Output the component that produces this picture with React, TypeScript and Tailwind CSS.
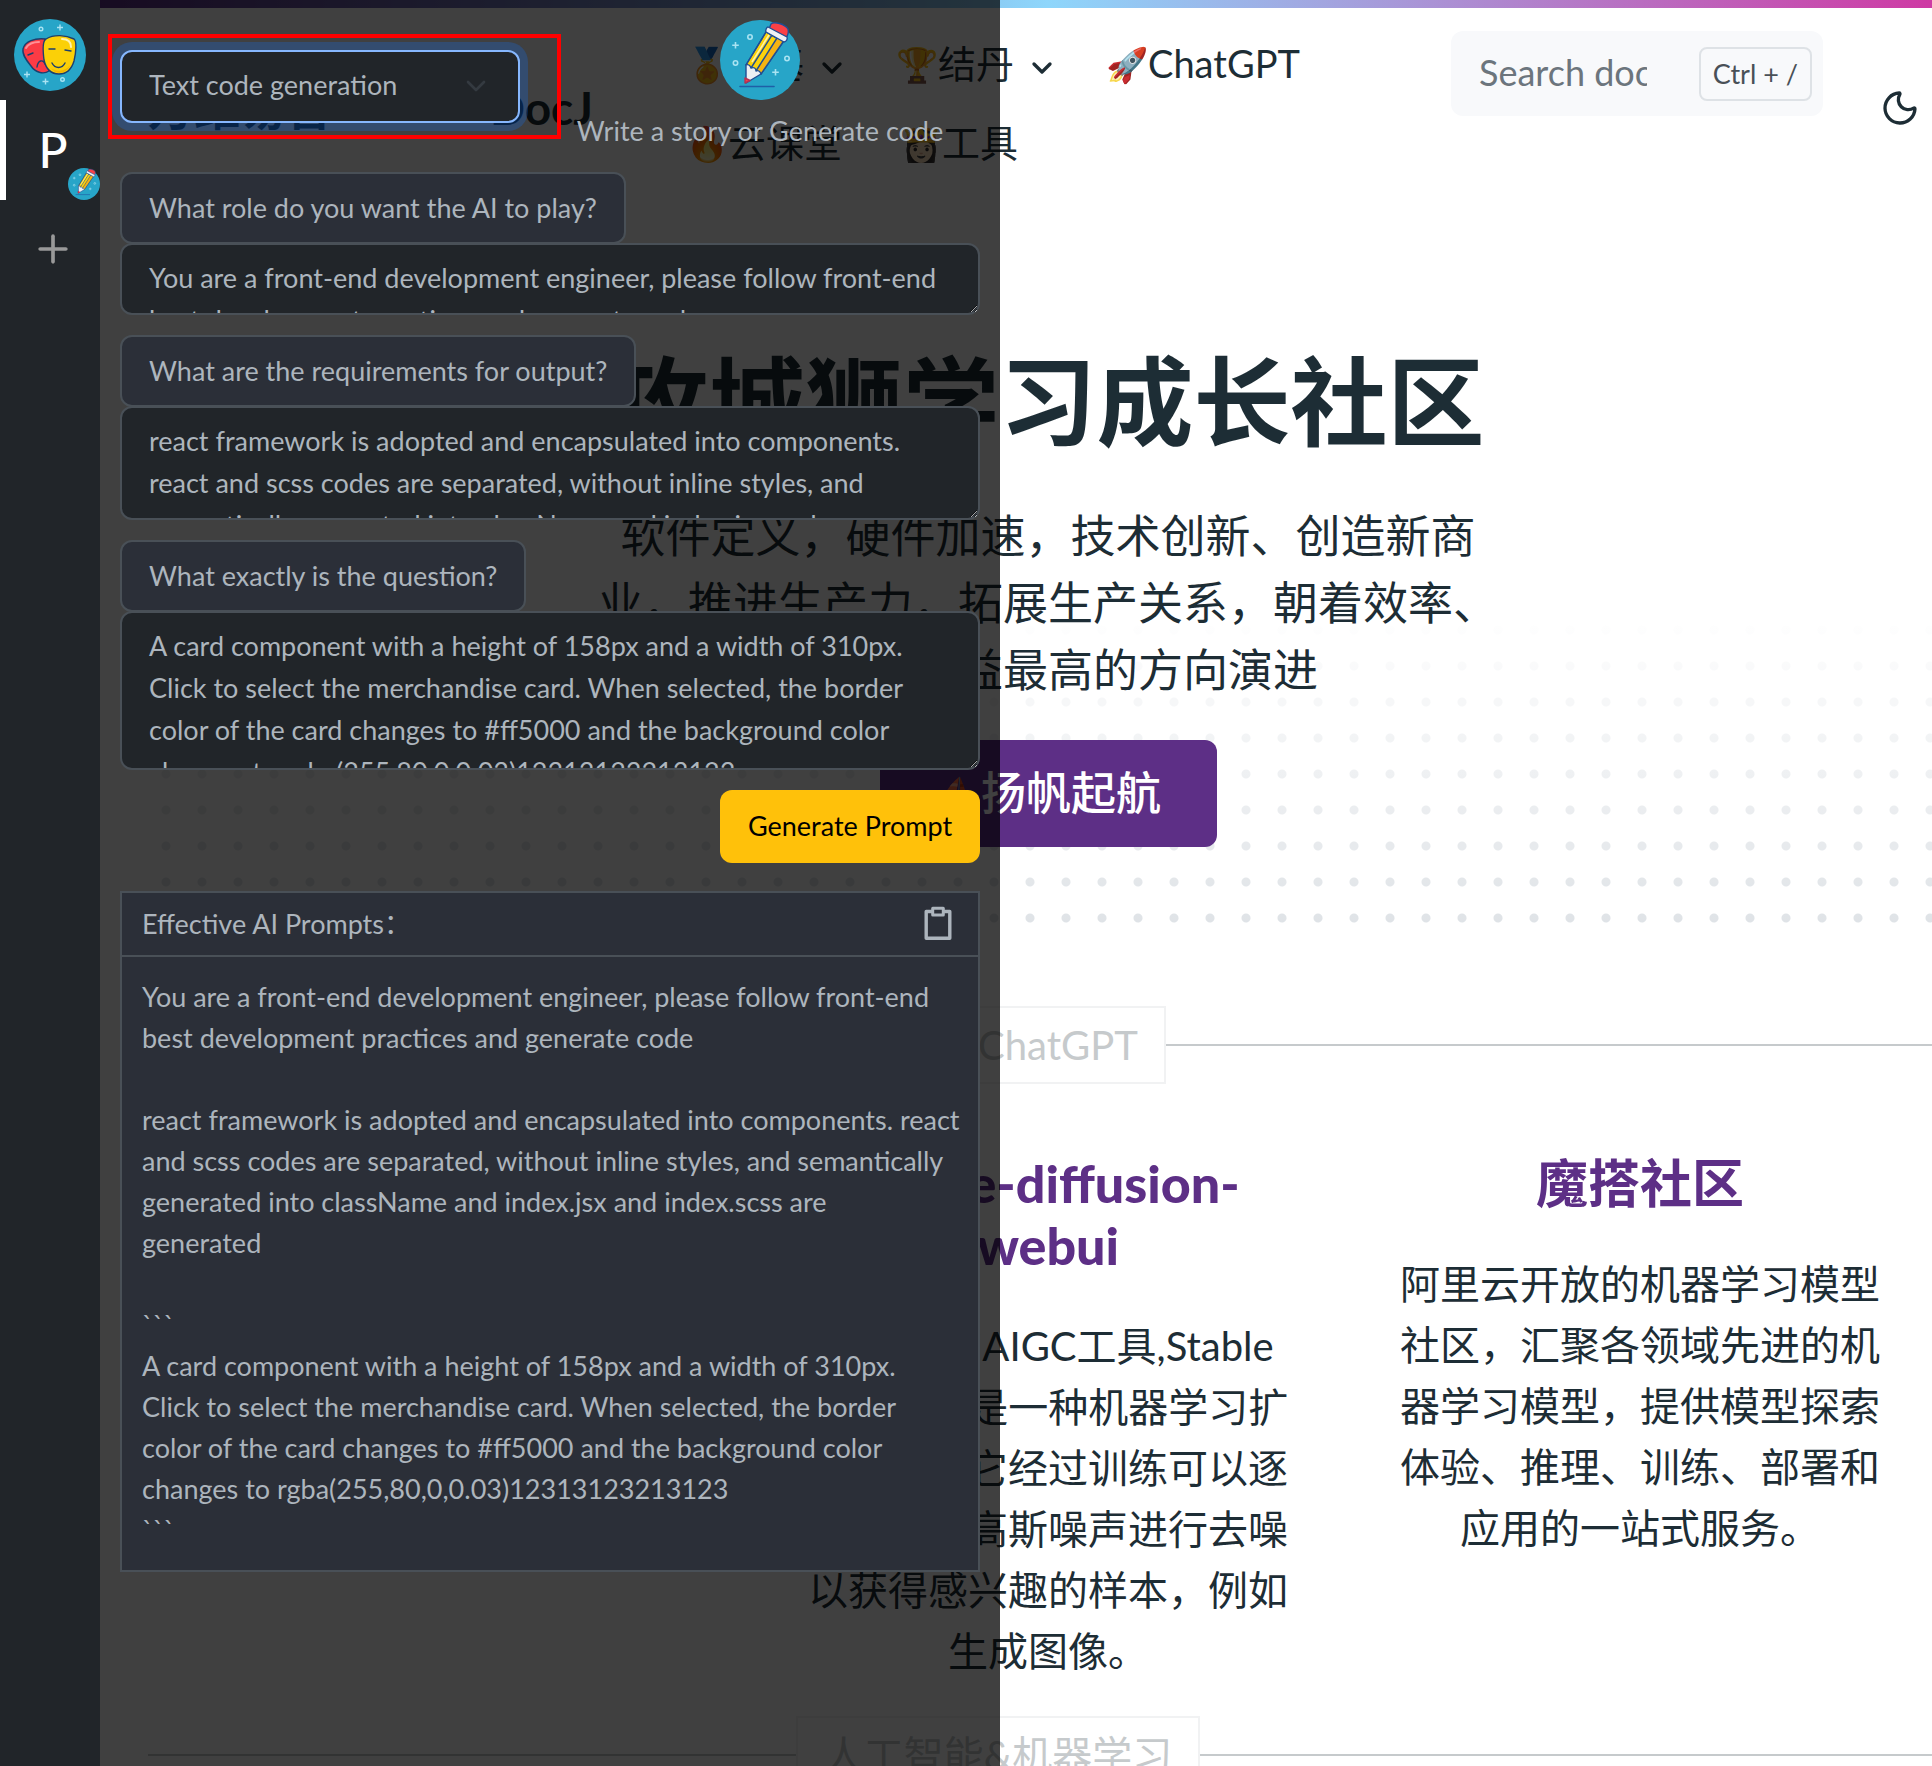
import type { ReactNode } from "react";
import { ChevronDown, Moon, Plus } from "lucide-react";

function MasksLogo() {
  return (
    <svg viewBox="0 0 72 72" className="size-18" role="img" aria-label="Masks logo">
      <circle cx="36" cy="36" r="36" fill="#27a5c8" />
      <g fill="none" stroke="#a9e3f2" strokeWidth="1.4">
        <circle cx="27" cy="10" r="1.8" />
        <circle cx="48.500" cy="60.500" r="1.8" />
        <path d="M46 5.500v6M43 8.500h6M13 52.500v6M10 55.500h6M31.500 59.500v6M28.500 62.500h6" />
      </g>
      <g stroke="#1c3f6e" strokeWidth="1.4" strokeLinecap="round" strokeLinejoin="round">
        <path d="M9 30c2-8 12-11 22-10l4 32c-6 4-14 1-18-5-4-5-9-11-8-17Z" fill="#fb3b45" />
        <path d="M14 36l5-2M23 48c1-7 6-8 8-3" fill="none" />
        <path d="M32 20c8-5 20-4 28 0 3 2 2 14 0 22-3 10-9 13-15 13-8 0-13-5-15-14-1-8-2-19 2-21Z" fill="#fbd007" />
        <path d="M35 30h6M51 31l6 1M38 44c3 6 10 6 13 0" fill="none" />
      </g>
      <path d="M12 29c3-5 8-6 13-6" fill="none" stroke="#ff8f96" strokeWidth="2" strokeLinecap="round" />
      <path d="M48 20c6 0 9 3 9 8" fill="none" stroke="#fff3b0" strokeWidth="2" strokeLinecap="round" />
      <path d="M37 49c5 4 15 4 20-4-3 6-7 9-12 9-3 0-6-2-8-5Z" fill="#f5b400" />
    </svg>
  );
}

function PencilLogo({ className }: { className: string }) {
  return (
    <svg viewBox="0 0 80 80" className={className} role="img" aria-label="Pencil logo">
      <circle cx="40" cy="40" r="40" fill="#27a5c8" />
      <g fill="none" stroke="#a9e3f2" strokeWidth="1.6">
        <circle cx="30" cy="17" r="2.200" />
        <circle cx="15.500" cy="43" r="2.200" />
        <circle cx="67" cy="38.500" r="2.200" />
        <path d="M15.500 22v6.500M12.200 25.200h6.600M55.500 49v6.500M52.200 52.200h6.600" />
      </g>
      <g stroke="#1f4e94" strokeWidth="1.400" strokeLinejoin="round">
        <path d="M51 4c3-3 14 0 17 5 1 3 0 6-2 9L49 9Z" fill="#fb4046" />
        <path d="M46 12l17 10-22 32-15-9Z" fill="#fcd20b" />
        <path d="M57 18l6 4-22 32-5-3Z" fill="#f5b313" stroke="none" />
        <path d="M52 15L31 48M57 18L36 51M46 12L26 45M63 22L41 54" fill="none" />
        <path d="M48 7l19 10c1 2-1 5-3 5L46 12c-1-2 1-5 2-5Z" fill="#eef1f6" />
        <path d="M26 45c2-1 4 0 5 3 3-1 5 0 5 3 2-1 4 0 5 3L26 63Z" fill="#eceff3" />
        <path d="M25 58l5 2.500-5 2.500Z" fill="#fb4046" stroke="#b33355" />
      </g>
      <path d="M49 15L32 42" stroke="#fff2a6" strokeWidth="1.600" />
      <path d="M20 66.500h34" stroke="#1f5fa6" strokeWidth="1.600" strokeLinecap="round" />
    </svg>
  );
}

function NavItem({ icon, label, menu }: { icon: string; label: string; menu?: boolean }) {
  return (
    <a href="#" className="flex items-center whitespace-nowrap">
      <span className="w-[42px] overflow-hidden text-center text-[34px]">{icon}</span>
      {label}
      {menu && <ChevronDown className="ml-3 mt-2 size-8" strokeWidth={2.5} />}
    </a>
  );
}

function Divider({ children }: { children: ReactNode }) {
  return (
    <div className="flex items-center">
      <span className="h-[2px] flex-1 bg-[#c6cacc]" />
      <span className="border-2 border-[#f1f2f3] px-[26px] text-[40px] leading-[74px] whitespace-nowrap text-[#c6cacc]">
        {children}
      </span>
      <span className="h-[2px] flex-1 bg-[#c6cacc] pl-[100px]" />
    </div>
  );
}

function Card({ title, lines }: { title: ReactNode; lines: string[] }) {
  return (
    <article className="text-center">
      <h2 className="text-[52px] leading-[62px] font-bold whitespace-nowrap text-[#5d2f86]">{title}</h2>
      <p className="mt-10 text-[40px] leading-[61px]">
        {lines.map((t) => (
          <span key={t} className="block whitespace-nowrap">{t}</span>
        ))}
      </p>
    </article>
  );
}

function Page() {
  return (
    <div className="-mr-16 ml-[100px]">
      <div className="h-2 bg-[linear-gradient(90deg,#5d2f86,#8ed6fb_50%,#d32e9d)]" />
      <header className="flex px-12">
        <a
          href="#"
          className="mt-[72px] flex w-[538px] gap-[158px] text-[46px] leading-[56px] font-bold whitespace-nowrap"
        >
          <span>万维易智</span>
          <span>DocJ</span>
        </a>
        <nav className="mt-4 flex-1 text-[38px] leading-[79px]">
          <div className="flex gap-12">
            <NavItem icon="🏅" label="筑基" menu />
            <NavItem icon="🏆" label="结丹" menu />
            <NavItem icon="🚀" label="ChatGPT" />
          </div>
          <div className="flex gap-[58px]">
            <NavItem icon="🔥" label="云课堂" />
            <NavItem icon="👸🏻" label="工具" />
          </div>
        </nav>
        <label className="mt-[23px] flex h-[85px] w-[372px] items-center justify-between rounded-xl bg-[#f8f9fb] pr-[11px] pl-7">
          <input
            aria-label="Search docs"
            placeholder="Search docs..."
            className="w-[168px] bg-transparent pb-1 text-[36px] placeholder:text-[#6c757d] placeholder:opacity-100"
          />
          <kbd className="rounded-lg border-2 border-[#dee2e6] px-3 font-[inherit] text-[27px] leading-[50px] whitespace-nowrap text-[#495057]">
            Ctrl + /
          </kbd>
        </label>
        <button aria-label="Toggle dark mode" className="mt-20 mr-7 ml-[57px] h-10">
          <Moon className="size-10" strokeWidth={2} />
        </button>
      </header>

      <main className="px-12">
        <section className="mt-[160px] bg-[linear-gradient(to_bottom,white_46%,transparent_100%),radial-gradient(circle_at_center,#dee2e6_4px,transparent_5px)] bg-[size:100%_100%,36px_36px] bg-[position:left_bottom,left_bottom] pb-[89px] text-center">
          <h1 className="text-[97px] leading-[118px] font-bold whitespace-nowrap">攻城狮学习成长社区</h1>
          <p className="mt-[43px] text-[45px] leading-[67px] whitespace-nowrap">
            软件定义，硬件加速，技术创新、创造新商
            <br />
            业，推进生产力，拓展生产关系，朝着效率、
            <br />
            质量、收益最高的方向演进
          </p>
          <a
            href="#"
            className="mt-9 inline-flex h-[107px] w-[337px] items-center justify-center rounded-xl bg-[#5d2f86] text-[45px] font-medium whitespace-nowrap text-white"
          >
            <span className="mr-1 text-[34px]">⛵</span>扬帆起航
          </a>
        </section>
        <div className="mt-[70px]">
          <Divider>大模型ChatGPT</Divider>
        </div>
        <div className="mt-[68px] grid grid-cols-3 px-3">
          <div />
          <Card
            title={
              <span className="font-black">
                stable-diffusion-
                <br />
                webui
              </span>
            }
            lines={[
              "最热门的AIGC工具,Stable",
              "Diffusion是一种机器学习扩",
              "散模型，它经过训练可以逐",
              "步对随机高斯噪声进行去噪",
              "以获得感兴趣的样本，例如",
              "生成图像。",
            ]}
          />
          <Card
            title="魔搭社区"
            lines={[
              "阿里云开放的机器学习模型",
              "社区，汇聚各领域先进的机",
              "器学习模型，提供模型探索",
              "体验、推理、训练、部署和",
              "应用的一站式服务。",
            ]}
          />
        </div>
        <div className="mt-[34px]">
          <Divider>人工智能&amp;机器学习</Divider>
        </div>
      </main>
    </div>
  );
}

function Sidebar() {
  return (
    <aside className="flex w-[100px] shrink-0 flex-col bg-[#212529]">
      <div className="flex h-[100px] items-center justify-center pt-2.5">
        <MasksLogo />
      </div>
      <button className="relative h-[100px] border-l-[6px] border-white text-[48px] font-medium text-white">
        P
        <PencilLogo className="absolute right-0 bottom-0 size-8" />
      </button>
      <button aria-label="Add" className="flex h-[98px] items-center justify-center pl-1.5 text-[#999]">
        <Plus className="size-11" strokeWidth={2} />
      </button>
    </aside>
  );
}

function Field({ id, label, value, box }: { id: string; label: string; value: string; box: string }) {
  return (
    <div className="mb-5 flex flex-col items-start">
      <label
        htmlFor={id}
        className="rounded-xl border-2 border-[#495057] bg-[#2b2f38] px-[27px] py-[13px] leading-[42px] whitespace-nowrap"
      >
        {label}
      </label>
      <textarea
        id={id}
        defaultValue={value}
        className={`-mt-px w-full overflow-hidden rounded-xl border-2 border-[#495057] bg-[#212529] px-[27px] pt-3 leading-[42px] ${box}`}
      />
    </div>
  );
}

const role =
  "You are a front-end development engineer, please follow front-end\nbest development practices and generate code";
const requirements =
  "react framework is adopted and encapsulated into components.\nreact and scss codes are separated, without inline styles, and\nsemantically generated into className and index.jsx and";
const question =
  "A card component with a height of 158px and a width of 310px.\nClick to select the merchandise card. When selected, the border\ncolor of the card changes to #ff5000 and the background color\nchanges to rgba(255,80,0,0.03)12313123213123";
const prompt = `${role}

react framework is adopted and encapsulated into components. react
and scss codes are separated, without inline styles, and semantically
generated into className and index.jsx and index.scss are
generated

\`\`\`
${question}
\`\`\``;

function Panel() {
  return (
    <div className="min-w-0 flex-1 bg-black/75 p-5 text-[27px] text-[#adb5bd]">
      <div className="mb-5 flex gap-5">
        <div className="relative mt-[30px] h-[73px] w-[400px]">
          <select
            aria-label="Prompt type"
            className="size-full appearance-none rounded-xl border-2 border-[#86b7fe] bg-[#212529] px-[27px] pb-0.5 shadow-[0_0_0_8px_rgba(13,110,253,0.25)] outline-none"
          >
            <option>Text code generation</option>
          </select>
          <ChevronDown className="pointer-events-none absolute top-5 right-7 size-8 text-[#343a40]" />
          <div className="pointer-events-none absolute -top-4 -right-[41px] -bottom-4 -left-3 border-4 border-[#ff0000]" />
        </div>
        <div className="flex flex-1 flex-col items-center">
          <PencilLogo className="size-20" />
          <p className="mt-2.5 leading-[42px] whitespace-nowrap">Write a story or Generate code</p>
        </div>
      </div>
      <Field id="role" label="What role do you want the AI to play?" value={role} box="h-[72px]" />
      <Field id="requirements" label="What are the requirements for output?" value={requirements} box="h-[114px]" />
      <Field id="question" label="What exactly is the question?" value={question} box="h-[159px]" />
      <div className="flex justify-end">
        <button className="h-[73px] w-[260px] rounded-xl bg-[#ffc10a] whitespace-nowrap text-black">
          Generate Prompt
        </button>
      </div>
      <section className="mt-7 border-2 border-[#495057] bg-[#2b2f38]">
        <div className="flex h-[64px] items-center justify-between border-b-2 border-[#495057] pr-[26px] pl-5">
          <h2>Effective AI Prompts：</h2>
          <button aria-label="Copy">
            <svg viewBox="0 0 28 36" className="h-9 w-7" fill="none" stroke="currentColor" strokeWidth="3.4">
              <path d="M8 5.500H2.200V32.300H25.800V5.500H20" strokeLinejoin="round" />
              <path d="M8.700 2.200H19.300V9H8.700Z" strokeLinejoin="round" strokeWidth="3" />
            </svg>
          </button>
        </div>
        <pre className="px-5 pt-[19px] pb-5 font-[inherit] leading-[41px]">{prompt}</pre>
      </section>
    </div>
  );
}

export default function App() {
  return (
    <div className="relative h-screen overflow-hidden bg-white font-['Lato','Noto_Sans_CJK_SC',sans-serif] text-[#1d2d35]">
      <Page />
      <div className="absolute inset-y-0 left-0 flex w-[1000px]">
        <Sidebar />
        <Panel />
      </div>
    </div>
  );
}
